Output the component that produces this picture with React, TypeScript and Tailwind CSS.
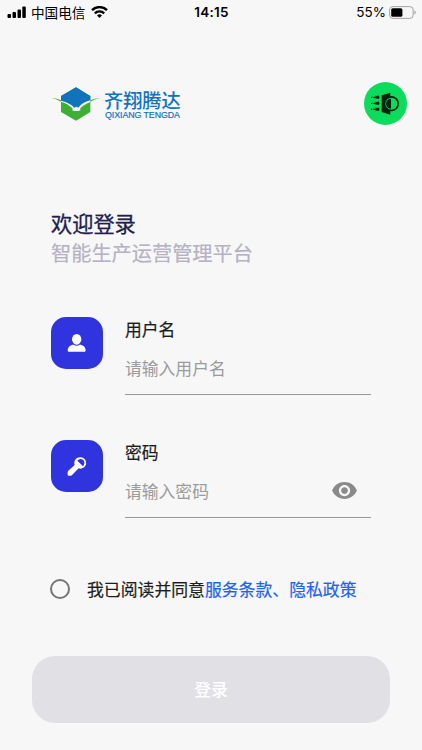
import { useState } from "react";

const fields = [
  {
    name: "username",
    label: "用户名",
    placeholder: "请输入用户名",
  },
  {
    name: "password",
    label: "密码",
    placeholder: "请输入密码",
  },
];

const StatusBar = () => {
  return (
    <div className="grid grid-cols-[1fr_auto_1fr] items-center h-6 pl-[7px] pr-[6px]">
      <div className="flex items-center">
        <svg width="19" height="12" viewBox="0 0 19 12">
          <rect x="0.5" y="8" width="3.5" height="4" rx="1" />
          <rect x="5.5" y="6" width="3.5" height="6" rx="1" />
          <rect x="10.5" y="3.4" width="3.5" height="8.6" rx="1" />
          <rect x="15.3" y="0.6" width="3.5" height="11.4" rx="1" />
        </svg>
        <span className="ml-[5px] text-[13.6px] leading-[22px]">中国电信</span>
        <svg
          className="ml-[6px]"
          width="17"
          height="12"
          viewBox="0 0 17 12"
          fill="none"
          stroke="black"
          strokeWidth="2.4"
        >
          <path d="M1 4.2a10.6 10.6 0 0 1 15 0" />
          <path d="M3.8 7.3a6.7 6.7 0 0 1 9.4 0" />
          <path d="M8.5 12L6 9.4a3.6 3.6 0 0 1 5 0z" fill="black" stroke="none" />
        </svg>
      </div>
      <span className="font-['Inter','Noto_Sans_CJK_SC',sans-serif] font-semibold text-[13.5px] tracking-[0.3px] leading-6">
        14:15
      </span>
      <div className="flex items-center justify-end">
        <span className="font-['Inter','Noto_Sans_CJK_SC',sans-serif] text-[13.5px] leading-6 mr-[3px]">
          55%
        </span>
        <svg width="27" height="13" viewBox="0 0 27 13">
          <rect
            x="0.6"
            y="0.6"
            width="23.6"
            height="11.8"
            rx="3.4"
            fill="none"
            stroke="#a3a3a3"
          />
          <rect x="2.2" y="2.2" width="11.2" height="8.6" rx="1.6" />
          <path d="M25.4 4.5q1.4.6 1.4 2t-1.4 2z" fill="#a3a3a3" />
        </svg>
      </div>
    </div>
  );
};

const Logo = () => {
  return (
    <div className="flex">
      <svg width="50" height="36" viewBox="0 0 150 108">
        <path d="M75 1l43 26v48l-43 26-45-26V27z" fill="#3fae35" />
        <path d="M75 1l43 26v14Q98 46 82 63H70Q56 48 30 41V27z" fill="#1273bd" />
        <path
          d="M30 41q28 7 40 21l6-3 6 3q12-16 36-22v5q-22 8-32 22l4 2-8 3H70l-8-3 4-3Q52 50 30 44z"
          fill="#f7f7f7"
        />
        <path d="M1 32q18 2 29 8v4Q18 37 1 32z" fill="#3fae35" />
        <path d="M148 33q-18 1-30 7v4q12-7 30-11z" fill="#3fae35" />
      </svg>
      <div className="ml-[3px] pt-[3px] text-[#1273bd]">
        <p className="text-[19.2px] leading-[20px] font-medium whitespace-nowrap">
          齐翔腾达
        </p>
        <p className="font-['Liberation_Sans',sans-serif] text-[8.8px] leading-[11px] tracking-[-0.05px] pl-[1px] whitespace-nowrap [-webkit-text-stroke:0.2px]">
          QIXIANG TENGDA
        </p>
      </div>
    </div>
  );
};

const ThemeButton = () => {
  return (
    <button
      type="button"
      aria-label="theme"
      className="w-[43px] h-[43px] rounded-full bg-[#0bdc5c]"
    >
      <svg width="43" height="43" viewBox="0 0 129 129">
        {[46, 64, 82].map((y) => (
          <g key={y}>
            <path d={`M21 ${y}h4m3 0h8`} stroke="#05240f" strokeWidth="4" />
            <path d={`M35 ${y - 6}l4 3 4-3 4 6-4 6-4-3-4 3z`} fill="#05240f" />
          </g>
        ))}
        <path d="M53 40l26-8v66l-26-8z" fill="#05240f" />
        <circle cx="82" cy="65" r="23" fill="#05240f" />
        <circle cx="82" cy="65" r="18" fill="#0bdc5c" />
        <path d="M81 50a15 15 0 0 0 0 30z" fill="#05240f" />
      </svg>
    </button>
  );
};

const FieldIcon = ({ name }: { name: string }) => {
  return (
    <div className="w-[52px] h-[52px] rounded-[15px] bg-[#3034df] shrink-0">
      {name === "username" ? (
        <svg width="52" height="52" viewBox="0 0 156 156" fill="white">
          <ellipse cx="77" cy="67" rx="14" ry="16" />
          <path d="M50 100c0-10 8-17 18-17q9 6 18 0c10 0 18 7 18 17q0 4-3 4H53q-3 0-3-4z" />
        </svg>
      ) : (
        <svg width="52" height="52" viewBox="0 0 156 156" fill="white">
          <path
            fillRule="evenodd"
            d="M88 52a17 17 0 1 1-5 33L64 104q-2 3-5 3h-6q-3 0-3-3v-7q0-3 2-5l19-17a17 17 0 0 1 17-23zm-9 10l17 17q4-4 4-10a12 12 0 0 0-12-12q-5 0-9 5z"
          />
        </svg>
      )}
    </div>
  );
};

const App = () => {
  const [agreed, setAgreed] = useState(false);
  const [visible, setVisible] = useState(false);

  return (
    <div className="w-[422px] h-[750px] overflow-hidden flex flex-col bg-[#f7f7f7] text-black font-['Noto_Sans_CJK_SC',sans-serif]">
      <StatusBar />

      <header className="flex justify-between items-start mt-[58px] pl-[51px] pr-[15px] h-[43px]">
        <div className="pt-[5px]">
          <Logo />
        </div>
        <ThemeButton />
      </header>

      <div className="mt-[83px] pl-[51px]">
        <h1 className="text-[21.2px] leading-[30px] font-normal text-[#211d4d] [-webkit-text-stroke:0.3px_#211d4d]">
          欢迎登录
        </h1>
        <p className="text-[20.2px] leading-[30px] text-[#b4b2c3] [-webkit-text-stroke:0.2px_#b4b2c3]">
          智能生产运营管理平台
        </p>
      </div>

      <form className="mt-[49px] pl-[51px] pr-[51px] flex flex-col gap-[45px]">
        {fields.map((item) => {
          return (
            <div key={item.name} className="flex h-[78px]">
              <FieldIcon name={item.name} />
              <div className="ml-[22px] flex-1 min-w-0 border-b border-[#999999]">
                <label
                  htmlFor={item.name}
                  className="block text-[16.8px] leading-6 text-[#1c1c1c] [-webkit-text-stroke:0.2px_#1c1c1c]"
                >
                  {item.label}
                </label>
                <div className="flex items-center mt-[15px] h-6">
                  <input
                    id={item.name}
                    type={
                      item.name === "password" && !visible ? "password" : "text"
                    }
                    placeholder={item.placeholder}
                    className="flex-1 min-w-0 h-6 bg-transparent outline-none text-[16.8px] leading-6 placeholder:text-[#9b9b9b]"
                  />
                  {item.name === "password" && (
                    <button
                      type="button"
                      aria-label="visible"
                      className="mr-[12px] mb-[2px]"
                      onClick={() => setVisible((prev) => !prev)}
                    >
                      <svg width="29" height="27" viewBox="0 0 24 24" fill="#8a8a8a">
                        <path d="M12 4.5C7 4.5 2.73 7.61 1 12c1.73 4.39 6 7.5 11 7.5s9.27-3.11 11-7.5c-1.73-4.39-6-7.5-11-7.5zM12 17c-2.76 0-5-2.24-5-5s2.24-5 5-5 5 2.24 5 5-2.24 5-5 5zm0-8c-1.66 0-3 1.34-3 3s1.34 3 3 3 3-1.34 3-3-1.34-3-3-3z" />
                      </svg>
                    </button>
                  )}
                </div>
              </div>
            </div>
          );
        })}
      </form>

      <div className="flex items-center mt-[58px] pl-[50px] h-[26px]">
        <button
          type="button"
          aria-label="agree"
          className={`w-5 h-5 rounded-full border-2 border-[#757575] ${
            agreed && "bg-[#3034df]"
          }`}
          onClick={() => setAgreed((prev) => !prev)}
        />
        <p className="ml-[17px] text-[16.85px] leading-6 text-[#1c1c1c] whitespace-nowrap [-webkit-text-stroke:0.2px]">
          我已阅读并同意<a className="text-[#1d63ed]">服务条款、隐私政策</a>
        </p>
      </div>

      <button
        type="button"
        className="mt-[54px] ml-8 w-[358px] h-[67px] shrink-0 rounded-[23px] bg-[#e1e0e5] text-white text-[16.8px] font-medium"
      >
        登录
      </button>
    </div>
  );
};

export default App;
